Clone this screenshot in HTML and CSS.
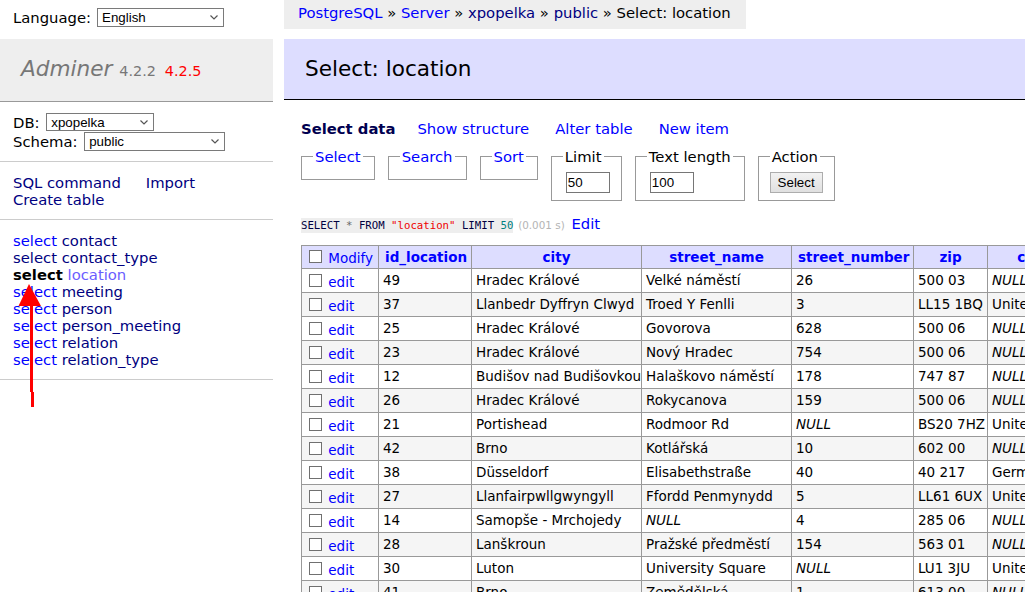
FILE: index.html
```html
<!DOCTYPE html>
<html lang="en">
<head>
<meta charset="utf-8">
<title>Select: location - Adminer</title>
<link rel="stylesheet" href="styles.css">
</head>
<body>
<div class="page">
  <div class="lang">
    <span>Language:</span>
    <span class="sel sel-lang"><select><option>English</option></select><svg class="chev" viewBox="0 0 8 5" width="8" height="5"><path d="M0.5 0.5 L4 4 L7.5 0.5" fill="none" stroke="#555" stroke-width="1.2"/></svg></span>
  </div>
  <div class="crumbs">
    <div class="breadcrumb"><a href="#">PostgreSQL</a> » <a href="#">Server</a> » <a class="visited" href="#">xpopelka</a> » <a class="visited" href="#">public</a> » Select: location</div>
  </div>

  <div class="menu">
    <h1><a class="h1" href="#">Adminer</a> <span class="version">4.2.2</span> <a class="version new" href="#">4.2.5</a></h1>
    <div class="dbs">
      <div class="dbline">DB: <span class="sel sel-db"><select><option>xpopelka</option></select><svg class="chev" viewBox="0 0 8 5" width="8" height="5"><path d="M0.5 0.5 L4 4 L7.5 0.5" fill="none" stroke="#555" stroke-width="1.2"/></svg></span></div>
      <div class="dbline">Schema: <span class="sel sel-schema"><select><option>public</option></select><svg class="chev" viewBox="0 0 8 5" width="8" height="5"><path d="M0.5 0.5 L4 4 L7.5 0.5" fill="none" stroke="#555" stroke-width="1.2"/></svg></span></div>
    </div>
    <p class="menu-links"><a class="visited" href="#">SQL command</a><a class="visited import" href="#">Import</a><br><a class="visited" href="#">Create table</a></p>
    <p class="tables">
      <a href="#">select</a> <a class="visited" href="#">contact</a><br>
      <a class="visited" href="#">select</a> <a class="visited" href="#">contact_type</a><br>
      <a class="active" href="#">select</a> <a class="current" href="#">location</a><br>
      <a href="#">select</a> <a class="visited" href="#">meeting</a><br>
      <a href="#">select</a> <a class="visited" href="#">person</a><br>
      <a href="#">select</a> <a class="visited" href="#">person_meeting</a><br>
      <a href="#">select</a> <a class="visited" href="#">relation</a><br>
      <a href="#">select</a> <a class="visited" href="#">relation_type</a>
    </p>
  </div>

  <div class="content">
    <h2>Select: location</h2>
    <div class="inner">
      <p class="links"><a class="active-link" href="#">Select data</a><a href="#">Show structure</a><a href="#">Alter table</a><a href="#">New item</a></p>
      <form class="sets">
        <fieldset><legend><a href="#">Select</a></legend></fieldset>
        <fieldset><legend><a href="#">Search</a></legend></fieldset>
        <fieldset><legend><a href="#">Sort</a></legend></fieldset>
        <fieldset><legend>Limit</legend><input class="num" type="text" value="50"></fieldset>
        <fieldset><legend>Text length</legend><input class="num" type="text" value="100"></fieldset>
        <fieldset><legend>Action</legend><button type="button" class="btn">Select</button></fieldset>
      </form>
      <p class="sql"><code class="jush"><span class="kw">SELECT</span> <span class="op">*</span> <span class="kw">FROM</span> <span class="quo">"location"</span> <span class="kw">LIMIT</span> <span class="num-c">50</span></code> <span class="time">(0.001 s)</span> <a href="#">Edit</a></p>
      <table class="data">
        <colgroup>
          <col class="c-mod"><col class="c-id"><col class="c-city"><col class="c-street"><col class="c-num"><col class="c-zip"><col class="c-country">
        </colgroup>
        <thead>
          <tr>
            <td class="modify"><input type="checkbox" class="cb"> <a href="#" class="low">Modify</a></td>
            <th><a href="#">id_location</a></th>
            <th><a href="#">city</a></th>
            <th><a href="#">street_name</a></th>
            <th><a href="#">street_number</a></th>
            <th><a href="#">zip</a></th>
            <th><a href="#">country</a></th>
          </tr>
        </thead>
        <tbody>
          <tr><td><input type="checkbox" class="cb"> <a href="#" class="low">edit</a></td><td>49</td><td>Hradec Králové</td><td>Velké náměstí</td><td>26</td><td>500 03</td><td><i>NULL</i></td></tr>
          <tr class="odd"><td><input type="checkbox" class="cb"> <a href="#" class="low">edit</a></td><td>37</td><td>Llanbedr Dyffryn Clwyd</td><td>Troed Y Fenlli</td><td>3</td><td>LL15 1BQ</td><td>United Kingdom</td></tr>
          <tr><td><input type="checkbox" class="cb"> <a href="#" class="low">edit</a></td><td>25</td><td>Hradec Králové</td><td>Govorova</td><td>628</td><td>500 06</td><td><i>NULL</i></td></tr>
          <tr class="odd"><td><input type="checkbox" class="cb"> <a href="#" class="low">edit</a></td><td>23</td><td>Hradec Králové</td><td>Nový Hradec</td><td>754</td><td>500 06</td><td><i>NULL</i></td></tr>
          <tr><td><input type="checkbox" class="cb"> <a href="#" class="low">edit</a></td><td>12</td><td>Budišov nad Budišovkou</td><td>Halaškovo náměstí</td><td>178</td><td>747 87</td><td><i>NULL</i></td></tr>
          <tr class="odd"><td><input type="checkbox" class="cb"> <a href="#" class="low">edit</a></td><td>26</td><td>Hradec Králové</td><td>Rokycanova</td><td>159</td><td>500 06</td><td><i>NULL</i></td></tr>
          <tr><td><input type="checkbox" class="cb"> <a href="#" class="low">edit</a></td><td>21</td><td>Portishead</td><td>Rodmoor Rd</td><td><i>NULL</i></td><td>BS20 7HZ</td><td>United Kingdom</td></tr>
          <tr class="odd"><td><input type="checkbox" class="cb"> <a href="#" class="low">edit</a></td><td>42</td><td>Brno</td><td>Kotlářská</td><td>10</td><td>602 00</td><td><i>NULL</i></td></tr>
          <tr><td><input type="checkbox" class="cb"> <a href="#" class="low">edit</a></td><td>38</td><td>Düsseldorf</td><td>Elisabethstraße</td><td>40</td><td>40 217</td><td>Germany</td></tr>
          <tr class="odd"><td><input type="checkbox" class="cb"> <a href="#" class="low">edit</a></td><td>27</td><td>Llanfairpwllgwyngyll</td><td>Ffordd Penmynydd</td><td>5</td><td>LL61 6UX</td><td>United Kingdom</td></tr>
          <tr><td><input type="checkbox" class="cb"> <a href="#" class="low">edit</a></td><td>14</td><td>Samopše - Mrchojedy</td><td><i>NULL</i></td><td>4</td><td>285 06</td><td><i>NULL</i></td></tr>
          <tr class="odd"><td><input type="checkbox" class="cb"> <a href="#" class="low">edit</a></td><td>28</td><td>Lanškroun</td><td>Pražské předměstí</td><td>154</td><td>563 01</td><td><i>NULL</i></td></tr>
          <tr><td><input type="checkbox" class="cb"> <a href="#" class="low">edit</a></td><td>30</td><td>Luton</td><td>University Square</td><td><i>NULL</i></td><td>LU1 3JU</td><td>United Kingdom</td></tr>
          <tr class="odd"><td><input type="checkbox" class="cb"> <a href="#" class="low">edit</a></td><td>41</td><td>Brno</td><td>Zemědělská</td><td>1</td><td>613 00</td><td><i>NULL</i></td></tr>
        </tbody>
      </table>
    </div>
  </div>
</div>
<svg class="arrow" width="60" height="420" viewBox="0 0 60 420">
  <polygon points="29,284 18.5,306 41,306" fill="#f00"/>
  <path d="M31.5 305 L31.5 392 M32.5 392 L32.5 407" stroke="#f00" stroke-width="3" fill="none"/>
</svg>
</body>
</html>
```

FILE: styles.css
```css
html, body {
  margin: 0;
  padding: 0;
  overflow: hidden;
}
body {
  font-family: "DejaVu Sans", Verdana, sans-serif;
  font-size: 14.8px;
  line-height: 17px;
  color: #000;
  background: #fff;
  position: relative;
  height: 592px;
}
a {
  color: #00f;
  text-decoration: none;
}
a.visited {
  color: #000080;
}
.page {
  display: grid;
  grid-template-columns: 284px 1fr;
  grid-template-rows: 29px auto;
}

/* language */
.lang {
  display: flex;
  align-items: center;
  gap: 6px;
  padding: 8px 0 0 13px;
  height: 19px;
}
.sel {
  position: relative;
  display: inline-block;
  vertical-align: top;
}
.sel select {
  -webkit-appearance: none;
  appearance: none;
  display: block;
  box-sizing: border-box;
  width: 100%;
  height: 19px;
  margin: 0;
  border: 1px solid #7a7a7a;
  border-radius: 0;
  background: #fff;
  color: #000;
  font-family: "Liberation Sans", Arial, sans-serif;
  font-size: 13.33px;
  padding: 0 0 0 4px;
  line-height: 17px;
}
.chev {
  position: absolute;
  right: 6px;
  top: 7px;
}
.sel-lang { width: 127px; }
.sel-db { width: 108px; }
.sel-db select { height: 18px; }
.sel-schema { width: 141px; }

/* breadcrumb */
.crumbs {
  display: flex;
}
.breadcrumb {
  background: #eee;
  height: 29px;
  line-height: 26px;
  padding: 0 15px 0 14px;
  white-space: nowrap;
}

/* menu */
.menu {
  margin-top: 10px;
  width: 273px;
}
h1 {
  margin: 0;
  background: #eee;
  border-bottom: 1px solid #999;
  font-size: 21.6px;
  line-height: 25px;
  font-weight: normal;
  padding: 17px 21px 17px 21px;
  color: #777;
  white-space: nowrap;
}
h1 .h1 {
  color: #777;
  font-style: italic;
}
.version {
  font-size: 14.4px;
  color: #777;
}
.version.new {
  color: red;
  margin-left: 2px;
}
.dbs {
  padding: 11px 0 10px 13px;
  border-bottom: 1px solid #ccc;
}
.dbline {
  height: 19px;
  line-height: 19px;
}
.dbline .sel {
  margin-left: 2px;
}
.menu-links, .tables {
  margin: 0;
  padding: 12px 14px 11px 13px;
  border-bottom: 1px solid #ccc;
}
.menu-links .import {
  margin-left: 25px;
}
.tables .active {
  font-weight: bold;
  color: #000;
}
.tables .current {
  color: #6a5cff;
}

/* content */
.content {
  padding-top: 10px;
  min-width: 0;
}
h2 {
  margin: 0;
  background: #ddf;
  border-bottom: 1px solid #000;
  font-size: 21.6px;
  line-height: 25px;
  font-weight: normal;
  padding: 17px 22px 18px 21px;
}
.inner {
  padding-left: 17px;
}
.links {
  margin: 20px 0 0 0;
  display: flex;
  gap: 26px;
  white-space: nowrap;
}
.links .active-link {
  font-weight: bold;
  color: #000050;
  margin-right: -4px;
}
.sets {
  display: flex;
  align-items: flex-start;
  gap: 13px;
  margin: 11px 0 0 0;
}
fieldset {
  margin: 0;
  padding: 7px 11px 7px 11px;
  border: 1px solid #999;
  min-width: 0;
}
legend {
  padding: 0 2px;
  line-height: 17px;
}
.num {
  box-sizing: border-box;
  width: 44px;
  height: 21px;
  margin: 0 0 0 3px;
  border: 1px solid #767676;
  padding: 1px 1px;
  font-family: "Liberation Sans", Arial, sans-serif;
  font-size: 13.33px;
  display: block;
  background: #fff;
}
.btn {
  display: block;
  box-sizing: border-box;
  height: 21px;
  width: 53px;
  margin: 0;
  border: 1px solid #adadad;
  background: linear-gradient(#f2f2f2, #e0e0e0);
  font-family: "Liberation Sans", Arial, sans-serif;
  font-size: 13.33px;
  color: #000;
  padding: 0;
}
.sql {
  margin: 14px 0 0 0;
  line-height: 17px;
  white-space: nowrap;
}
.jush {
  background: #eee;
  font-family: "DejaVu Sans Mono", "Liberation Mono", monospace;
  font-size: 10.7px;
  padding: 1px 0;
}
.jush .kw { color: #000040; }
.jush .op { color: #666; }
.jush .quo { color: #e00; }
.jush .num-c { color: #008080; }
.time {
  color: #b4b4b4;
  font-size: 10.4px;
  margin-right: 2px;
}

/* table */
.data {
  border-collapse: collapse;
  table-layout: fixed;
  width: 804px;
  margin-top: 11px;
  font-size: 13.5px;
}
.c-mod { width: 77px; }
.c-id { width: 93px; }
.c-city { width: 170px; }
.c-street { width: 150px; }
.c-num { width: 122px; }
.c-zip { width: 74px; }
.c-country { width: 118px; }
.data td, .data th {
  border: 1px solid #999;
  padding: 0 4px;
  line-height: 17px;
  white-space: nowrap;
  overflow: hidden;
  text-align: left;
}
.data thead tr { height: 23px; }
.data tbody tr { height: 24px; }
.data thead th, .data thead td {
  background: #ddf;
}
.data thead th {
  text-align: center;
  font-weight: bold;
  padding: 0 6px;
}
.data tr.odd td {
  background: #f5f5f5;
}
.cb {
  -webkit-appearance: none;
  appearance: none;
  box-sizing: border-box;
  width: 13px;
  height: 13px;
  margin: 0 0 0 3px;
  border: 1px solid #707070;
  background: #fff;
  vertical-align: -3px;
}
.low {
  vertical-align: -3px;
  margin-left: 2px;
}
i {
  font-style: italic;
}

/* annotation arrow */
.arrow {
  position: absolute;
  left: 0;
  top: 0;
  pointer-events: none;
}
```
